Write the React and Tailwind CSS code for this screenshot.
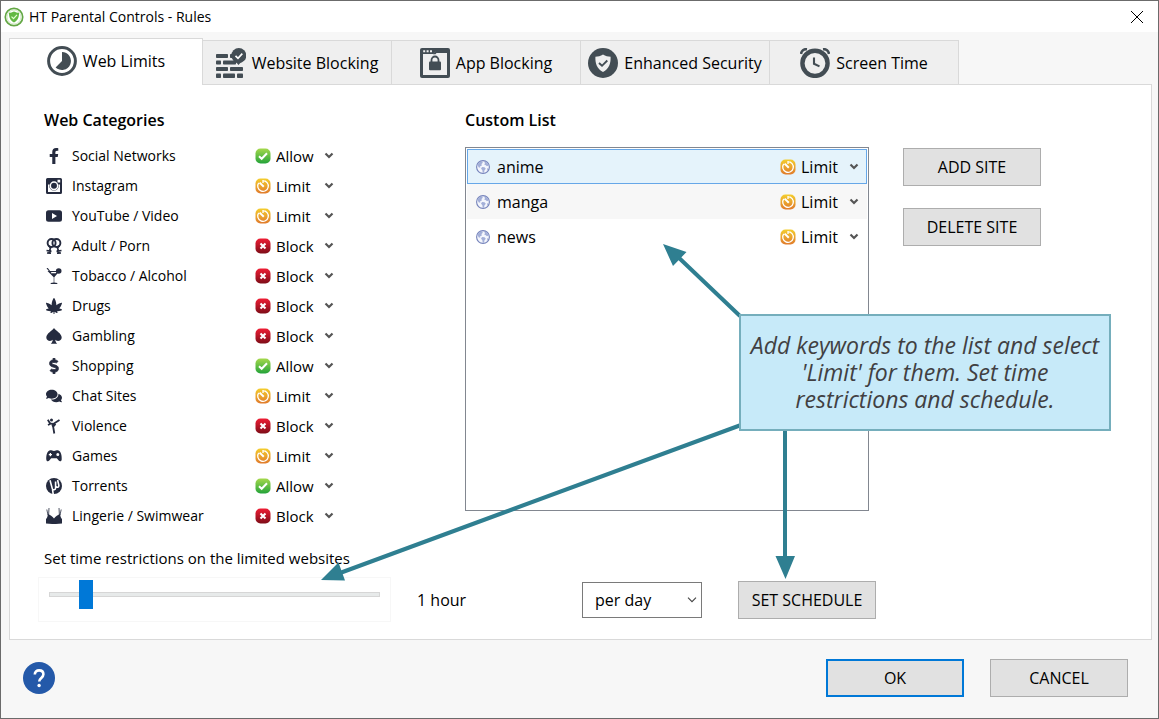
import { useState } from "react";
import { FaCannabis, FaComments, FaDollarSign, FaFacebookF } from "react-icons/fa";

const CATEGORIES = [
  { name: "Social Networks", icon: "facebook", rule: "Allow" },
  { name: "Instagram", icon: "instagram", rule: "Limit" },
  { name: "YouTube / Video", icon: "video", rule: "Limit" },
  { name: "Adult / Porn", icon: "adult", rule: "Block" },
  { name: "Tobacco / Alcohol", icon: "alcohol", rule: "Block" },
  { name: "Drugs", icon: "drugs", rule: "Block" },
  { name: "Gambling", icon: "gambling", rule: "Block" },
  { name: "Shopping", icon: "shopping", rule: "Allow" },
  { name: "Chat Sites", icon: "chat", rule: "Limit" },
  { name: "Violence", icon: "violence", rule: "Block" },
  { name: "Games", icon: "games", rule: "Limit" },
  { name: "Torrents", icon: "torrents", rule: "Allow" },
  { name: "Lingerie / Swimwear", icon: "lingerie", rule: "Block" },
];

const SITES = [
  { name: "anime", rule: "Limit" },
  { name: "manga", rule: "Limit" },
  { name: "news", rule: "Limit" },
];

const TABS = [
  { name: "Web Limits", Icon: LimitsIcon },
  { name: "Website Blocking", Icon: WallIcon },
  { name: "App Blocking", Icon: AppIcon },
  { name: "Enhanced Security", Icon: SecurityIcon },
  { name: "Screen Time", Icon: AlarmIcon },
];

const tabIcon = "h-[30px] w-[30px] shrink-0 text-[#434d54]";

function LimitsIcon() {
  return (
    <svg viewBox="0 0 30 30" className={tabIcon} aria-hidden="true">
      <circle cx="15" cy="15" r="13.4" fill="none" stroke="currentColor" strokeWidth="3" />
      <path d="M15 6a9 9 0 1 1-6.4 15.4L15 15z" fill="currentColor" />
    </svg>
  );
}

function WallIcon() {
  return (
    <svg viewBox="0 0 30 30" className={tabIcon} fill="currentColor" aria-hidden="true">
      <rect x="0" y="6" width="12" height="4" rx=".8" />
      <rect x="14" y="6" width="6" height="4" rx=".8" />
      <rect x="0" y="12.500" width="5" height="4" rx=".8" />
      <rect x="7" y="12.500" width="13" height="4" rx=".8" />
      <rect x="0" y="19" width="12" height="4" rx=".8" />
      <rect x="14" y="19" width="13" height="4" rx=".8" />
      <rect x="0" y="25.500" width="5" height="4.500" rx=".8" />
      <rect x="7" y="25.500" width="12" height="4.500" rx=".8" />
      <rect x="21" y="25.500" width="6" height="4.500" rx=".8" />
      <circle cx="22.800" cy="7.500" r="7.500" />
      <path d="M18 12h9l-4.500 5z" />
      <path d="M19.500 7.800l2.500 2.500 4.300-4.600" fill="none" stroke="#fff" strokeWidth="1.700" />
    </svg>
  );
}

function AppIcon() {
  return (
    <svg viewBox="0 0 30 30" className={tabIcon} aria-hidden="true">
      <rect width="30" height="30" rx="2" fill="currentColor" />
      <path d="M3 6h10.500l2-2.500H27V27H3z" fill="#efefef" />
      <path d="M13 6.200l2.500-3.200H27.500v2H16.500l-1 1.200z" fill="currentColor" />
      <path d="M3.200 2.300h2v2h-2zM6.600 2.300h2v2h-2zM10 2.300h2v2h-2z" fill="#efefef" />
      <rect x="9" y="13.500" width="12" height="8.800" rx="1" fill="currentColor" />
      <path d="M11.500 14v-2a3.500 3.500 0 0 1 7 0v2" fill="none" stroke="currentColor" strokeWidth="1.800" />
    </svg>
  );
}

function SecurityIcon() {
  return (
    <svg viewBox="0 0 30 30" className={tabIcon} aria-hidden="true">
      <circle cx="15" cy="15" r="15" fill="currentColor" />
      <path d="M15 6.500c2.500 1.700 5 2.200 7.600 2.200.3 6.500-1.600 12.300-7.600 15.200-6-2.900-7.900-8.700-7.600-15.200 2.600 0 5.100-.5 7.600-2.200z" fill="#efefef" />
      <path d="M11 15l3 2.800 5.300-5.300" fill="none" stroke="currentColor" strokeWidth="1.900" />
    </svg>
  );
}

function AlarmIcon() {
  return (
    <svg viewBox="0 0 30 30" className={tabIcon} fill="none" stroke="currentColor" aria-hidden="true">
      <path d="M1 6c.4-3 3-5.200 6-4.800M29 6c-.4-3-3-5.200-6-4.800" strokeWidth="2.600" />
      <circle cx="15" cy="15.300" r="12.600" strokeWidth="4.400" />
      <path d="M14 9.500v6.300l5.500 2.600" strokeWidth="2.100" />
    </svg>
  );
}

function CategoryIcon({ icon }) {
  const cls = "h-4 w-4 shrink-0 text-[#252b3f]";
  if (icon === "facebook") return <FaFacebookF className={cls} />;
  if (icon === "drugs") return <FaCannabis className={cls} />;
  if (icon === "shopping") {
    return <FaDollarSign className={cls} stroke="currentColor" strokeWidth="24" />;
  }
  if (icon === "chat") return <FaComments className={cls} />;
  return (
    <svg viewBox="0 0 16 16" className={cls} fill="currentColor" aria-hidden="true">
      {icon === "instagram" && (
        <>
          <path fillRule="evenodd" d="M1.500 0h13A1.500 1.500 0 0 1 16 1.500v13a1.500 1.500 0 0 1-1.500 1.500h-13A1.500 1.500 0 0 1 0 14.500v-13A1.500 1.500 0 0 1 1.500 0zM2 6.500v7.500h12V6.500h-1.500A4.700 4.700 0 1 1 3.500 6.500zM11.500 1.800v2.700h2.700V1.800z" />
          <circle cx="8" cy="7.800" r="3.700" fill="none" stroke="#fff" strokeWidth="1.500" />
        </>
      )}
      {icon === "video" && (
        <path fillRule="evenodd" d="M2.500 2.300h11A2.500 2.500 0 0 1 16 4.800v6.400a2.500 2.500 0 0 1-2.500 2.500h-11A2.500 2.500 0 0 1 0 11.200V4.800a2.500 2.500 0 0 1 2.500-2.500zM6 5v6l5-3z" />
      )}
      {icon === "adult" && (
        <g fill="none" stroke="currentColor" strokeWidth="1.900">
          <circle cx="5.600" cy="5" r="4" />
          <circle cx="10.400" cy="5" r="4" />
          <path d="M2.500 7.500l2 2.500-1.500 4.500M.5 12.500l5 .8M13.500 7.500l-2 2.500 1.500 4.500M15.500 12.500l-5 .8M1 15l4 .2M15 15l-4 .2" strokeWidth="1.700" />
        </g>
      )}
      {icon === "alcohol" && (
        <>
          <path d="M1.500 3h12L8.300 9.200v5.200l3 .6v1H4.700v-1l3-.6V9.200z" />
          <path d="M3.800 4h7L9.700 5.200H5z" fill="#fff" />
          <circle cx="12.700" cy="3" r="2.800" />
          <path d="M1 0l4 5" fill="none" stroke="currentColor" strokeWidth="1.200" />
        </>
      )}
      {icon === "gambling" && (
        <path d="M8 0c1.500 2.500 7.700 5.500 7.700 9.400 0 2.700-2.700 4-4.800 3.400-.7-.2-1.200-.5-1.600-1 .1 1.600.8 3 1.900 3.900H4.800c1.100-.9 1.800-2.300 1.900-3.900-.4.500-.9.800-1.600 1C3 13.400.3 12.100.3 9.400.3 5.500 6.500 2.500 8 0z" />
      )}
      {icon === "violence" && (
        <>
          <circle cx="5.500" cy="1.900" r="1.500" />
          <path d="M1.800 1.700l2 3.300 3 1.300L13.500 2M2 7l3-1.500M5.800 5l1.500 4.500 1 6M7 8.800l2.500-3" fill="none" stroke="currentColor" strokeWidth="1.800" />
        </>
      )}
      {icon === "games" && (
        <path fillRule="evenodd" d="M3.500 2.500c1.800-.6 2.600.5 4.500.5s2.700-1.100 4.500-.5C15 3.300 16 8 15.700 11.500c-.2 2-2 2.400-3 1.100l-1.900-2.300H5.200l-1.900 2.300c-1 1.300-2.800.9-3-1.100C0 8 1 3.300 3.500 2.500zM3.800 5v1H2.800v1.200h1v1h1.200v-1h1V6h-1V5zM11.800 5a1.500 1.500 0 1 0 0 3 1.500 1.500 0 0 0 0-3z" />
      )}
      {icon === "torrents" && (
        <>
          <circle cx="8" cy="8" r="8" />
          <path d="M4 2.200l2.300 8.400c.5 1.700 3.300 1.500 3.300-.6V3.500M10 8.500c1.200 1.400 3.200.8 2.800-1.400L11.600 2M6.500 11.500L7.200 16" fill="none" stroke="#fff" strokeWidth="1.600" />
        </>
      )}
      {icon === "lingerie" && (
        <>
          <path d="M1.800 6C4 7 6.500 8 8 10.500 9.500 8 12 7 14.200 6c.2 3 .8 4 1.800 5v4.500c-5 .7-11 .7-16 0V11c1-1 1.600-2 1.800-5z" />
          <path d="M2.600 7L3 0M2 7L.8 1.500M13.400 7L13 0M14 7l1.200-5.500" fill="none" stroke="currentColor" strokeWidth=".8" />
        </>
      )}
    </svg>
  );
}

function RuleIcon({ rule }) {
  return (
    <svg viewBox="0 0 16 16" className="h-4 w-4 shrink-0" aria-hidden="true">
      <rect x=".5" y=".5" width="15" height="15" rx="5" fill={`url(#${rule})`} />
      {rule === "Allow" && (
        <path d="M4 8.200l2.700 2.600L12 5.300" fill="none" stroke="#fff" strokeWidth="2" />
      )}
      {rule === "Block" && (
        <path d="M5.500 5.500l5 5M10.500 5.500l-5 5" fill="none" stroke="#fff" strokeWidth="2.100" />
      )}
      {rule === "Limit" && (
        <g fill="none" stroke="#fff">
          <path d="M8 2.700a5.300 5.300 0 1 1-4.300 2.200M8 2v3" strokeWidth="1.300" />
          <path d="M4.600 4.600L8.800 8.800" strokeWidth="2" />
        </g>
      )}
    </svg>
  );
}

function Gradients() {
  return (
    <svg className="absolute h-0 w-0" aria-hidden="true">
      <defs>
        <linearGradient id="Allow" x2="0" y2="1">
          <stop stopColor="#a5d94c" />
          <stop offset="1" stopColor="#23a33a" />
        </linearGradient>
        <linearGradient id="Limit" x2="0" y2="1">
          <stop stopColor="#f4ce2e" />
          <stop offset="1" stopColor="#e07a2b" />
        </linearGradient>
        <linearGradient id="Block" x2="0" y2="1">
          <stop stopColor="#ef1d34" />
          <stop offset="1" stopColor="#7e0d18" />
        </linearGradient>
      </defs>
    </svg>
  );
}

function RuleSelect({ id, value, onChange, large }) {
  return (
    <div className="flex items-center gap-[5px]">
      <RuleIcon rule={value} />
      <div className="grid items-center">
        <select
          id={id}
          value={value}
          onChange={(e) => onChange(e.target.value)}
          className={`col-start-1 row-start-1 w-[58px] appearance-none bg-transparent outline-none ${
            large ? "text-base" : "text-[15px]"
          }`}
        >
          <option>Allow</option>
          <option>Limit</option>
          <option>Block</option>
        </select>
        <svg
          viewBox="0 0 10 8"
          className="pointer-events-none col-start-1 row-start-1 h-2 w-[10px] justify-self-end text-[#555]"
          aria-hidden="true"
        >
          <path d="M1.500 1.500L5 5l3.500-3.500" fill="none" stroke="currentColor" strokeWidth="2.200" />
        </svg>
      </div>
    </div>
  );
}

function Globe() {
  return (
    <svg viewBox="0 0 14 14" className="h-[14px] w-[14px] shrink-0" aria-hidden="true">
      <circle cx="7" cy="7" r="6.400" fill="#f4f6fc" stroke="#7482ba" strokeWidth="1.100" />
      <path d="M1.500 4.500C2.500 2.500 4 1.500 6 1.300l.8 1.500L5.500 4l.3 1.500L4 6.500l.3 1.300-1.800-.6zM8 1.300c2.500.3 4.200 2 4.700 4.200L11 6.300 9.500 5l-1.300-.5.8-1.300zM6 7l2.500.3 1.300 1.500-1.300 1.500-.5 2.400-1.300-.2L6.300 10 5 8.700zM11.200 8.500l1.200-.7c-.2 1.300-.7 2.300-1.600 3.200z" fill="#a3afd8" />
    </svg>
  );
}

function Button({ primary, children }) {
  return (
    <button
      type="button"
      className={`h-[38px] w-[138px] bg-[#e1e1e1] text-base ${
        primary ? "border-2 border-[#0078d7]" : "border border-[#adadad]"
      }`}
    >
      {children}
    </button>
  );
}

function TitleBar() {
  return (
    <header className="flex h-[31px] items-center justify-between bg-white pr-[14px] pl-[3px]">
      <div className="flex items-center gap-[5px]">
        <svg viewBox="0 0 20 20" className="h-5 w-5" aria-hidden="true">
          <circle cx="10" cy="10" r="8.700" fill="#fff" stroke="#63a744" strokeWidth="1.700" />
          <circle cx="10" cy="10" r="7" fill="none" stroke="#c5e2b5" strokeWidth=".8" />
          <path d="M10 4.500c1.700 1 3.300 1.300 5 1.300.2 4.400-1.200 7.800-5 9.700-3.800-1.900-5.200-5.300-5-9.700 1.700 0 3.300-.3 5-1.300z" fill="#63b944" />
          <path d="M7.500 9.700l2 2 3.500-3.800" fill="none" stroke="#e5ffd5" strokeWidth="1.200" />
        </svg>
        <h1 className="text-sm">HT Parental Controls - Rules</h1>
      </div>
      <button type="button" aria-label="Close">
        <svg viewBox="0 0 14 14" className="h-[14px] w-[14px]" aria-hidden="true">
          <path d="M1 1l12 12M13 1L1 13" fill="none" stroke="#000" strokeWidth="1" />
        </svg>
      </button>
    </header>
  );
}

function Tabs({ active, onSelect }) {
  return (
    <div role="tablist" className="flex items-end pt-1.5">
      {TABS.map(({ name, Icon }) => (
        <button
          key={name}
          type="button"
          role="tab"
          aria-selected={name === active}
          onClick={() => onSelect(name)}
          className={`flex items-center justify-center gap-1.5 border-[#d9d9d9] text-base ${
            name === active
              ? "z-10 -mb-px h-[47px] w-[194px] border-x border-t bg-white pb-[3px]"
              : "h-11 w-[189px] border-t border-r bg-[#efefef]"
          }`}
        >
          <Icon />
          {name}
        </button>
      ))}
    </div>
  );
}

function Categories() {
  const [rules, setRules] = useState(CATEGORIES.map((c) => c.rule));
  return (
    <section className="w-[421px]">
      <h2 className="mb-[9px] leading-6 font-semibold">Web Categories</h2>
      <ul>
        {CATEGORIES.map((c, i) => (
          <li key={c.name} className="flex h-[30px] items-center pl-0.5">
            <CategoryIcon icon={c.icon} />
            <label htmlFor={`category-${i}`} className="w-[193px] pl-[10px] text-sm">
              {c.name}
            </label>
            <RuleSelect
              id={`category-${i}`}
              value={rules[i]}
              onChange={(rule) => setRules(rules.map((r, j) => (j === i ? rule : r)))}
            />
          </li>
        ))}
      </ul>
    </section>
  );
}

function CustomList() {
  const [rules, setRules] = useState(SITES.map((s) => s.rule));
  const [selected, setSelected] = useState(0);
  return (
    <section>
      <h2 className="mb-[15px] leading-6 font-semibold">Custom List</h2>
      <div className="flex items-start gap-[34px]">
        <ul className="h-[364px] w-[404px] border border-[#828790] p-px">
          {SITES.map((site, i) => (
            <li
              key={site.name}
              onClick={() => setSelected(i)}
              className={`flex h-[35px] items-center justify-between border pr-[7px] pl-2 ${
                i === selected
                  ? "border-[#66a7e8] bg-[#e5f3fb]"
                  : i % 2
                    ? "border-[#f7f7f7] bg-[#f7f7f7]"
                    : "border-white"
              }`}
            >
              <label htmlFor={`site-${i}`} className="flex items-center gap-[7px]">
                <Globe />
                {site.name}
              </label>
              <RuleSelect
                large
                id={`site-${i}`}
                value={rules[i]}
                onChange={(rule) => setRules(rules.map((r, j) => (j === i ? rule : r)))}
              />
            </li>
          ))}
        </ul>
        <div className="flex flex-col gap-[22px] pt-px">
          <Button>ADD SITE</Button>
          <Button>DELETE SITE</Button>
        </div>
      </div>
    </section>
  );
}

function TimeLimit() {
  const [hours, setHours] = useState(1);
  return (
    <section className="pt-[15px]">
      <label htmlFor="hours" className="block pl-[34px] text-[15px] leading-6">
        Set time restrictions on the limited websites
      </label>
      <div className="flex items-center pl-7">
        <div className="mt-[7px] h-[45px] w-[353px] border border-[#f7f7f7] px-[10px] pt-0.5">
          <input
            id="hours"
            type="range"
            min="0"
            max="11"
            value={hours}
            onChange={(e) => setHours(Number(e.target.value))}
            className="block h-[29px] w-full appearance-none bg-transparent [&::-webkit-slider-runnable-track]:h-[5px] [&::-webkit-slider-runnable-track]:border [&::-webkit-slider-runnable-track]:border-[#d6d6d6] [&::-webkit-slider-runnable-track]:bg-[#e7eaea] [&::-webkit-slider-thumb]:-mt-[13px] [&::-webkit-slider-thumb]:h-[29px] [&::-webkit-slider-thumb]:w-[14px] [&::-webkit-slider-thumb]:appearance-none [&::-webkit-slider-thumb]:bg-[#0078d7]"
          />
        </div>
        <output htmlFor="hours" className="w-[165px] pt-2 pl-[26px]">
          {hours} {hours === 1 ? "hour" : "hours"}
        </output>
        <div className="mt-2 ml-[26px] grid items-center">
          <select
            aria-label="Period"
            className="col-start-1 row-start-1 h-9 w-[120px] appearance-none border border-[#7a7a7a] bg-white px-3"
          >
            <option>per day</option>
            <option>per week</option>
          </select>
          <svg
            viewBox="0 0 10 6"
            className="pointer-events-none col-start-1 row-start-1 mr-[5px] h-1.5 w-[10px] justify-self-end"
            aria-hidden="true"
          >
            <path d="M1 .7L5 4.700 9 .7" fill="none" stroke="#444" strokeWidth="1.100" />
          </svg>
        </div>
        <div className="mt-2 ml-9">
          <Button>SET SCHEDULE</Button>
        </div>
      </div>
    </section>
  );
}

function Callout() {
  return (
    <>
      <svg
        className="pointer-events-none absolute top-0 left-0 h-[556px] w-[900px] text-[#2f7f91]"
        viewBox="0 0 900 556"
        fill="currentColor"
        stroke="currentColor"
        aria-hidden="true"
      >
        <path d="M730 231L667 171M731 340L330 488M775 345V476" fill="none" strokeWidth="4" />
        <path d="M653 159L676.500 167 663 181zM311 495L328.500 477.500 335 495.500zM765.500 471h19.500l-9.500 23z" stroke="none" />
      </svg>
      <p className="absolute top-[229px] left-[729px] w-[372px] border-2 border-[#75aebc] bg-[#c7eaf9] px-1 py-4 text-center font-['Open_Sans','Noto_Sans',sans-serif] text-[23px] leading-[27px] text-[#414042] italic">
        Add keywords to the list and select 'Limit' for them. Set time restrictions and schedule.
      </p>
    </>
  );
}

export default function App() {
  const [tab, setTab] = useState("Web Limits");
  return (
    <div className="flex min-h-screen flex-col border border-[#6b6b6b] bg-[#f7f7f7] font-['Open_Sans','Noto_Sans',sans-serif] text-base text-black">
      <Gradients />
      <TitleBar />
      <main className="pr-1.5 pl-2">
        <Tabs active={tab} onSelect={setTab} />
        <div className="relative border border-[#d9d9d9] bg-white pb-[17px]">
          <div className="flex pt-[23px] pl-[34px]">
            <Categories />
            <CustomList />
          </div>
          <TimeLimit />
          <Callout />
        </div>
      </main>
      <footer className="flex items-center gap-[26px] pt-[19px] pr-[30px] pb-5 pl-[22px]">
        <button type="button" aria-label="Help" className="mr-auto">
          <svg viewBox="0 0 32 32" className="h-8 w-8" fill="none" aria-hidden="true">
            <circle cx="16" cy="16" r="16" fill="#2459a9" />
            <path d="M11.800 12.600c0-2.700 1.800-4.200 4.300-4.200s4.300 1.500 4.300 3.900c0 3.600-4.200 3.600-4.200 7.200" stroke="#fff" strokeWidth="2.600" />
            <circle cx="16.100" cy="23.500" r="1.700" fill="#fff" />
          </svg>
        </button>
        <Button primary>OK</Button>
        <Button>CANCEL</Button>
      </footer>
    </div>
  );
}
